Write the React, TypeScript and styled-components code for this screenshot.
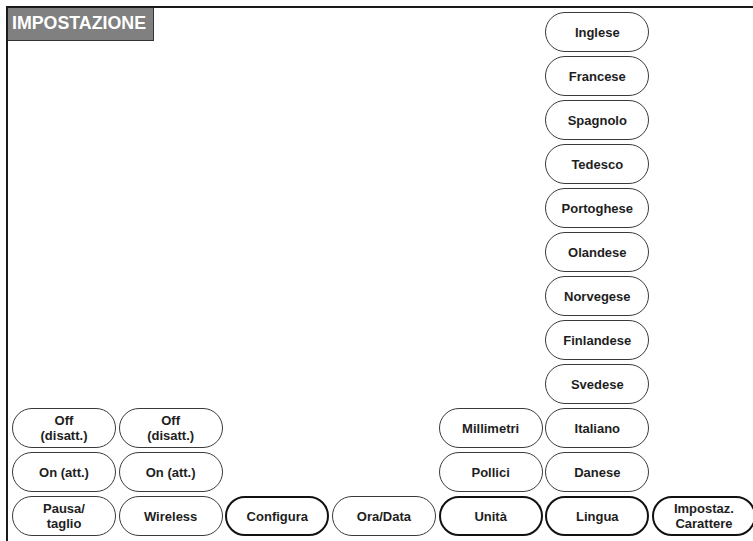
import React from 'react';
import styled, { createGlobalStyle } from 'styled-components';

const GlobalStyle = createGlobalStyle`
  html, body {
    margin: 0;
    padding: 0;
    background: #ffffff;
    overflow: hidden;
  }
  body {
    font-family: "Liberation Sans", Arial, sans-serif;
  }
`;

const Frame = styled.div`
  margin: 6px 0 0 6px;
  height: 535px;
  border-top: 2px solid #1a1a1a;
  border-left: 2px solid #1a1a1a;
  box-sizing: border-box;
`;

const Grid = styled.div`
  display: grid;
  grid-template-columns: repeat(7, 104px);
  grid-template-rows: repeat(12, 40px);
  column-gap: 2.67px;
  row-gap: 4px;
  padding: 4px 0 0 4px;
`;

const Title = styled.div`
  grid-column: 1 / 3;
  grid-row: 1;
  justify-self: start;
  align-self: start;
  margin: -4px 0 0 -4px;
  width: 146px;
  height: 33px;
  box-sizing: border-box;
  background: #808080;
  border-right: 1px solid #333;
  border-bottom: 1px solid #333;
  color: #ffffff;
  font-weight: bold;
  font-size: 17.8px;
  line-height: 31px;
  padding-left: 4px;
`;

const Key = styled.div<{ $col: number; $row: number; $bold?: boolean }>`
  grid-column: ${(p) => p.$col};
  grid-row: ${(p) => p.$row};
  display: flex;
  align-items: center;
  justify-content: center;
  text-align: center;
  box-sizing: border-box;
  border: ${(p) => (p.$bold ? '2.5px solid #111' : '1.3px solid #3a3a3a')};
  border-radius: 20px;
  background: #fff;
  color: #1e1e1e;
  font-weight: bold;
  font-size: 13px;
  line-height: 15px;
  white-space: pre-line;
`;

type KeyDef = { label: string; col: number; row: number; bold?: boolean };

const languages = [
  'Inglese',
  'Francese',
  'Spagnolo',
  'Tedesco',
  'Portoghese',
  'Olandese',
  'Norvegese',
  'Finlandese',
  'Svedese',
  'Italiano',
  'Danese',
];

const keys: KeyDef[] = [
  ...languages.map((label, i) => ({ label, col: 6, row: i + 1 })),
  { label: 'Off\n(disatt.)', col: 1, row: 10 },
  { label: 'Off\n(disatt.)', col: 2, row: 10 },
  { label: 'On (att.)', col: 1, row: 11 },
  { label: 'On (att.)', col: 2, row: 11 },
  { label: 'Millimetri', col: 5, row: 10 },
  { label: 'Pollici', col: 5, row: 11 },
  { label: 'Pausa/\ntaglio', col: 1, row: 12 },
  { label: 'Wireless', col: 2, row: 12 },
  { label: 'Configura', col: 3, row: 12, bold: true },
  { label: 'Ora/Data', col: 4, row: 12 },
  { label: 'Unità', col: 5, row: 12, bold: true },
  { label: 'Lingua', col: 6, row: 12, bold: true },
  { label: 'Impostaz.\nCarattere', col: 7, row: 12, bold: true },
];

export default function App() {
  return (
    <>
      <GlobalStyle />
      <Frame>
        <Grid>
          <Title>IMPOSTAZIONE</Title>
          {keys.map((k, i) => (
            <Key key={i} $col={k.col} $row={k.row} $bold={k.bold}>
              {k.label}
            </Key>
          ))}
        </Grid>
      </Frame>
    </>
  );
}
